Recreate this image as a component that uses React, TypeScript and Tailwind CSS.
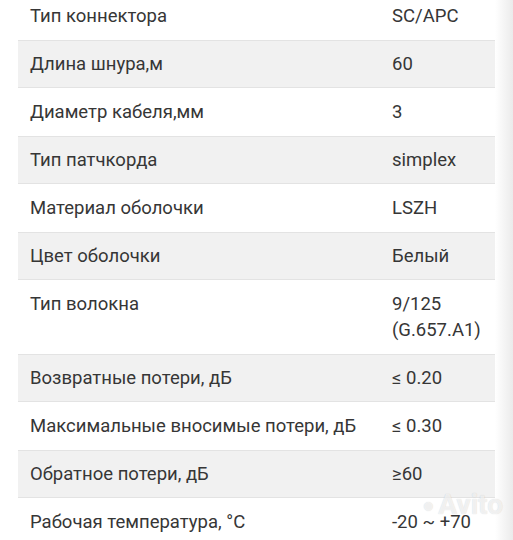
const rows: [string, string][] = [
  ["Тип коннектора", "SC/APC"],
  ["Длина шнура,м", "60"],
  ["Диаметр кабеля,мм", "3"],
  ["Тип патчкорда", "simplex"],
  ["Материал оболочки", "LSZH"],
  ["Цвет оболочки", "Белый"],
  ["Тип волокна", "9/125 (G.657.A1)"],
  ["Возвратные потери, дБ", "≤ 0.20"],
  ["Максимальные вносимые потери, дБ", "≤ 0.30"],
  ["Обратное потери, дБ", "≥60"],
  ["Рабочая температура, °C", "-20 ~ +70"],
];

function SpecTable() {
  return (
    <div className="w-[477px] flex flex-col">
      {rows.map(([label, value], i) => (
        <div
          key={label}
          className={
            i % 2 === 1
              ? "flex bg-[#f1f1f1] shadow-[inset_0_1px_0_#e3e3e3,inset_0_-1px_0_#e3e3e3]"
              : "flex bg-white"
          }
        >
          <div className="w-[362px] shrink-0 pl-3 pr-2 py-[11px] leading-[26px]">
            {label}
          </div>
          <div className="flex-1 pl-3 pr-3 py-[11px] leading-[26px]">
            {value}
          </div>
        </div>
      ))}
    </div>
  );
}

export default function App() {
  return (
    <div className="relative w-[513px] h-[540px] overflow-hidden bg-white font-['Roboto','Liberation_Sans',sans-serif] text-[18.5px] text-[#363636]">
      <div className="flex h-full">
        <div className="pl-[18px] -mt-[8px]">
          <SpecTable />
        </div>
        <div className="flex-1 bg-gradient-to-r from-white to-[#ebebeb]" />
      </div>
      <div className="absolute right-[10px] bottom-[14px] flex items-center gap-1 text-[28px] font-bold text-white/70 [text-shadow:0_0_1px_rgba(0,0,0,0.18)] select-none">
        <span className="text-[20px]">●</span>
        <span>Avito</span>
      </div>
    </div>
  );
}
